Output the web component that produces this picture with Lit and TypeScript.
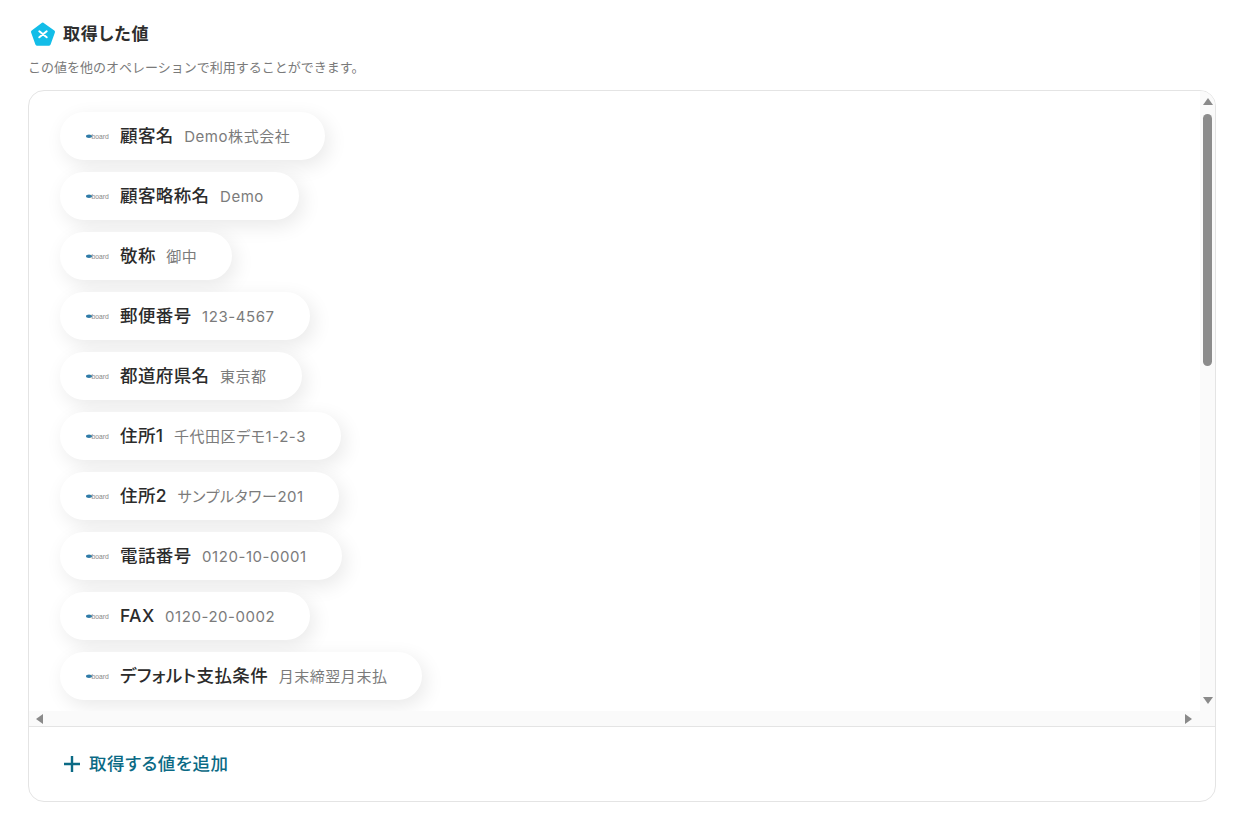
import { LitElement, html, css } from "lit";
import { customElement } from "lit/decorators.js";

const rows: [string, string][] = [
  ["顧客名", "Demo株式会社"],
  ["顧客略称名", "Demo"],
  ["敬称", "御中"],
  ["郵便番号", "123-4567"],
  ["都道府県名", "東京都"],
  ["住所1", "千代田区デモ1-2-3"],
  ["住所2", "サンプルタワー201"],
  ["電話番号", "0120-10-0001"],
  ["FAX", "0120-20-0002"],
  ["デフォルト支払条件", "月末締翌月末払"],
];

@customElement("app-root")
export class AppRoot extends LitElement {
  static styles = css`
    :host {
      display: block;
      width: 1240px;
      height: 820px;
      overflow: hidden;
      background: #fff;
      font-family: Inter, "Noto Sans CJK JP", "Noto Sans", sans-serif;
      font-feature-settings: "palt";
      box-sizing: border-box;
      padding: 19px 24px 0 28px;
      color: #2b2b2b;
    }
    .head { display: flex; align-items: center; gap: 7px; margin-left: 2px; height: 30px; }
    .head svg { display: block; flex: none; margin-top: -1px; }
    .title { font-size: 17px; font-weight: 600; letter-spacing: 0.8px; line-height: 30px; color: #2e2e2e; }
    .sub {
      font-size: 13px; line-height: 18px; color: #7a7a7a; font-feature-settings: normal;
      margin: 9px 0 0; height: 18px;
    }
    .box {
      margin-top: 14px;
      width: 1188px; height: 712px; box-sizing: border-box;
      border: 1px solid #e4e4e4; border-radius: 16px;
      display: grid; grid-template-rows: 620px 15px 1fr; overflow: hidden;
    }
    .view { display: grid; grid-template-columns: 1fr 15px; min-height: 0; }
    .list {
      display: flex; flex-direction: column; align-items: flex-start; gap: 12px;
      padding: 21px 0 0 31px; overflow: hidden;
    }
    .pill {
      display: flex; align-items: center; height: 48px; flex: none; box-sizing: border-box;
      padding: 2px 35px 0 26px; background: #fff; border-radius: 24px;
      box-shadow: 4px 6px 20px rgba(0, 0, 0, 0.09);
    }
    .logo { display: block; flex: none; margin: -2px 11px 0 0; }
    .logo-t { font: 6.800px "Liberation Sans", sans-serif; fill: #888; }
    .label { font-size: 17.5px; font-weight: 500; letter-spacing: 0.4px; color: #2b2b2b; line-height: 24px; white-space: nowrap; margin-top: -2px; }
    .val { font-size: 15px; letter-spacing: 0.55px; color: #7b7b7b; line-height: 24px; margin-left: 10.500px; white-space: nowrap; }
    .vbar { background: #fafafa; display: flex; flex-direction: column; align-items: center; padding: 7px 0 0; box-sizing: border-box; }
    .thumb { width: 9px; height: 252px; margin-top: 9px; border-radius: 5px; background: #8c8c8c; flex: none; }
    .spacer { flex: 1; }
    .arrow { display: block; flex: none; fill: #8a8a8a; }
    .down { margin-bottom: 7px; }
    .hbar {
      background: #fafafa; border-bottom: 1px solid #e4e4e4;
      display: flex; align-items: center; justify-content: space-between;
      padding: 0 23px 0 7px; height: 16px; box-sizing: border-box;
    }
    .foot { display: flex; align-items: center; gap: 9px; padding: 1px 0 0 35px; }
    .add { font-size: 17.5px; font-weight: 500; letter-spacing: 0.55px; color: #0b6a85; line-height: 24px; }
    .foot svg { display: block; flex: none; }
  `;

  render() {
    return html`
      <div class="head">
        <svg width="26" height="26" viewBox="0 0 26 26">
          <path d="M13 1.500 24.300 9.600a1.600 1.600 0 0 1 .6 1.800L20.600 23.600a1.600 1.600 0 0 1-1.500 1.100H6.900a1.600 1.600 0 0 1-1.500-1.100L1.100 11.400a1.600 1.600 0 0 1 .6-1.800L12 1.800a1.600 1.600 0 0 1 1-.3Z" fill="#13bde8"/>
          <path d="M9.300 10.300 16.700 16.300M16.700 10.300 9.300 16.300" fill="none" stroke="#fff" stroke-width="2" stroke-linecap="round"/>
        </svg>
        <span class="title">取得した値</span>
      </div>
      <p class="sub">この値を他のオペレーションで利用することができます。</p>
      <div class="box">
        <div class="view">
          <div class="list">
            ${rows.map(([k, v]) => html`
              <div class="pill">
                <svg class="logo" width="23" height="12" viewBox="0 0 23 12">
                  <ellipse cx="3" cy="6.200" rx="3" ry="1.700" fill="#2f7ba8"/>
                  <text class="logo-t" x="5.500" y="8.500">board</text>
                </svg>
                <span class="label">${k}</span>
                <span class="val">${v}</span>
              </div>
            `)}
          </div>
          <div class="vbar">
            <svg class="arrow" width="10" height="7" viewBox="0 0 10 7"><path d="M5 0 10 7H0Z"/></svg>
            <div class="thumb"></div>
            <div class="spacer"></div>
            <svg class="arrow down" width="10" height="7" viewBox="0 0 10 7"><path d="M0 0H10L5 7Z"/></svg>
          </div>
        </div>
        <div class="hbar">
          <svg class="arrow" width="7" height="10" viewBox="0 0 7 10"><path d="M7 0V10L0 5Z"/></svg>
          <svg class="arrow" width="7" height="10" viewBox="0 0 7 10"><path d="M0 0 7 5 0 10Z"/></svg>
        </div>
        <div class="foot">
          <svg width="16" height="16" viewBox="0 0 16 16"><path d="M8 0V16M0 8H16" stroke="#0b6a85" stroke-width="2.400"/></svg>
          <span class="add">取得する値を追加</span>
        </div>
      </div>
    `;
  }
}
